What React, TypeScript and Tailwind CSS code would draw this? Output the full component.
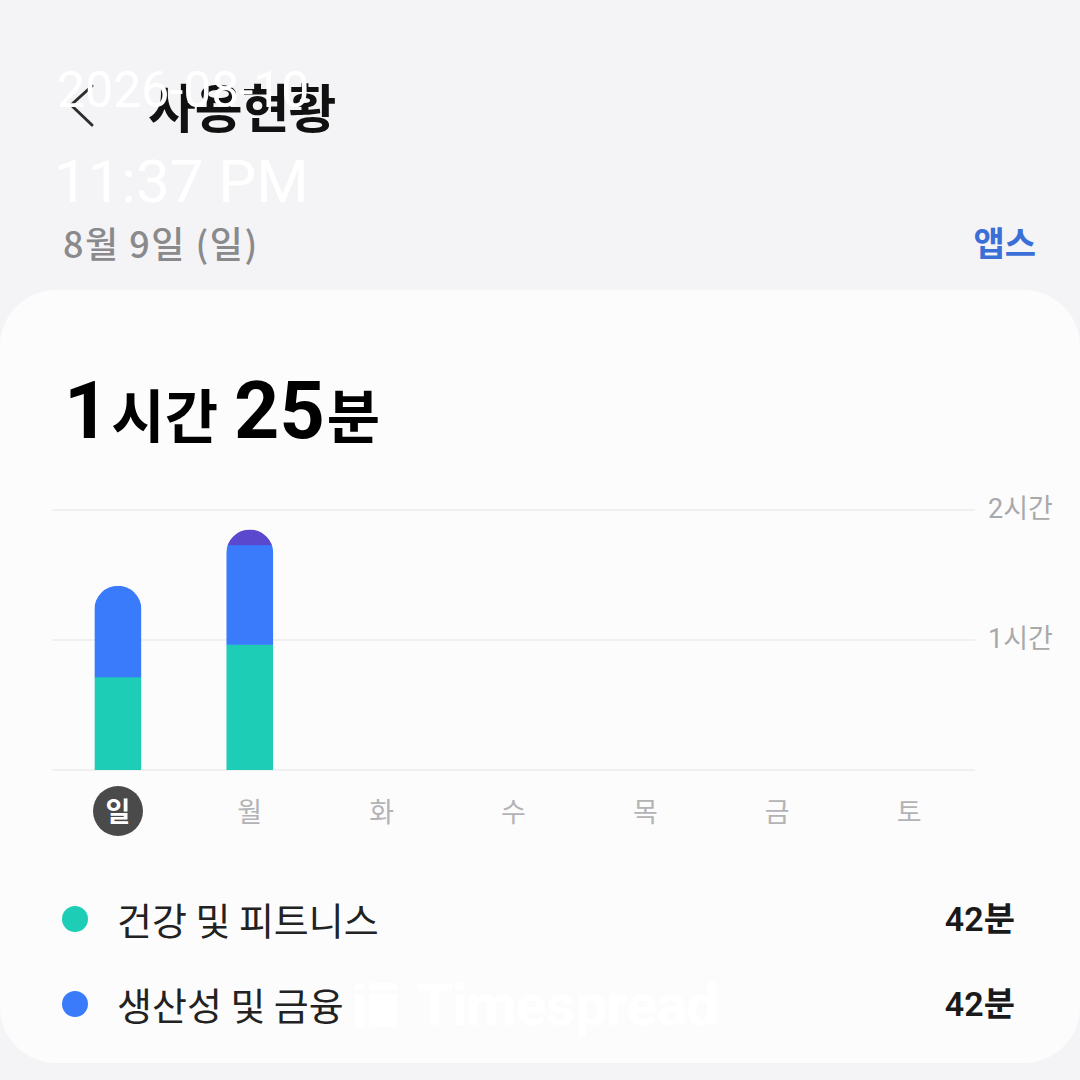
import React from 'react';

const days = ['일', '월', '화', '수', '목', '금', '토'];

// minutes per segment: teal, blue, purple
const usage = [
  { day: 0, teal: 43, blue: 42, purple: 0 },
  { day: 1, teal: 58, blue: 46, purple: 7 },
];

const COL = 923 / 7;
const BAR_W = 47;
const PX_PER_MIN = 130 / 60;

function UsageChart() {
  return (
    <svg width="923" height="262" viewBox="0 0 923 262" className="block">
      <line x1="0" y1="1" x2="923" y2="1" stroke="#ececef" strokeWidth="1.5" />
      <line x1="0" y1="131" x2="923" y2="131" stroke="#ececef" strokeWidth="1.5" />
      <line x1="0" y1="261" x2="923" y2="261" stroke="#ececef" strokeWidth="1.5" />
      {usage.map((u) => {
        const x = u.day * COL + COL / 2 - BAR_W / 2;
        const tealH = u.teal * PX_PER_MIN;
        const blueH = u.blue * PX_PER_MIN;
        const purpleH = u.purple * PX_PER_MIN;
        const total = tealH + blueH + purpleH;
        const top = 261 - total;
        const r = BAR_W / 2;
        const id = `bar-${u.day}`;
        return (
          <g key={u.day}>
            <clipPath id={id}>
              <path
                d={`M${x} 261 L${x} ${top + r} A${r} ${r} 0 0 1 ${x + BAR_W} ${top + r} L${x + BAR_W} 261 Z`}
              />
            </clipPath>
            <g clipPath={`url(#${id})`}>
              <rect x={x} y={261 - tealH} width={BAR_W} height={tealH} fill="#1ecdb5" />
              <rect x={x} y={261 - tealH - blueH} width={BAR_W} height={blueH + 0.5} fill="#3a7bfc" />
              {u.purple > 0 && (
                <rect x={x} y={top} width={BAR_W} height={purpleH + 0.5} fill="#5a49cf" />
              )}
            </g>
          </g>
        );
      })}
    </svg>
  );
}

export default function App() {
  return (
    <div className="relative w-[1080px] h-[1080px] overflow-hidden bg-[#f4f4f6] font-[family-name:Roboto,'Noto_Sans_CJK_KR',sans-serif]">
      {/* header */}
      <div className="pt-[78px]">
        <div className="flex items-center h-[56px] pl-[66px]">
          <svg width="32" height="46" viewBox="0 0 32 46" fill="none">
            <path d="M26 3 L5 22 L26 42" stroke="#2e2e2e" strokeWidth="3" strokeLinecap="round" strokeLinejoin="round" />
          </svg>
          <h1 className="ml-[50px] text-[52px] leading-none font-bold text-[#111] tracking-[-1px] font-[family-name:'Noto_Sans_CJK_KR',sans-serif]">
            사용현황
          </h1>
        </div>

        <div className="mt-[88px] flex items-center justify-between h-[40px] pl-[63px] pr-[44px] font-[family-name:'Noto_Sans_CJK_KR',sans-serif]">
          <span className="text-[36px] leading-none font-medium text-[#8a8a8c] tracking-[1.5px]">8월 9일 (일)</span>
          <span className="text-[34px] leading-none font-bold text-[#3b6fd8]">앱스</span>
        </div>
      </div>

      {/* card */}
      <div className="mt-[28px] bg-[#fcfcfc] rounded-[56px] pt-[82px] pb-[17px]">
        <div className="flex items-baseline pl-[64px] text-black font-bold leading-none">
          <span className="text-[79px]">1</span>
          <span className="text-[58px] ml-[2px] font-[family-name:'Noto_Sans_CJK_KR',sans-serif]">시간</span>
          <span className="text-[79px] ml-[16px]">25</span>
          <span className="text-[58px] ml-[2px] font-[family-name:'Noto_Sans_CJK_KR',sans-serif]">분</span>
        </div>

        <div className="mt-[58px] flex pl-[52px]">
          <UsageChart />
          <div className="ml-[13px] -mt-[15px] flex flex-col text-[27px] leading-[30px] text-[#a9a9ab]">
            <div className="h-[130px]">2시간</div>
            <div className="h-[130px]">1시간</div>
          </div>
        </div>

        <div className="mt-[15px] ml-[52px] w-[923px] grid grid-cols-7 text-[27px] font-[family-name:'Noto_Sans_CJK_KR',sans-serif]">
          {days.map((d, i) => (
            <div key={d} className="flex justify-center items-center h-[50px]">
              {i === 0 ? (
                <span className="flex items-center justify-center w-[50px] h-[50px] rounded-full bg-[#4a4a4a] text-white font-bold">
                  {d}
                </span>
              ) : (
                <span className="text-[#b3b3b5]">{d}</span>
              )}
            </div>
          ))}
        </div>

        <div className="mt-[40px] pl-[62px] pr-[65px] font-[family-name:'Noto_Sans_CJK_KR',sans-serif]">
          <div className="flex items-center h-[85px]">
            <span className="w-[26px] h-[26px] rounded-full bg-[#1ecdb5]" />
            <span className="ml-[29px] text-[38px] leading-none text-[#222]">건강 및 피트니스</span>
            <span className="ml-auto text-[34px] leading-none font-semibold text-[#1a1a1a] font-[family-name:Roboto,'Noto_Sans_CJK_KR',sans-serif]">42분</span>
          </div>
          <div className="flex items-center h-[85px]">
            <span className="w-[26px] h-[26px] rounded-full bg-[#3a7bfc]" />
            <span className="ml-[29px] text-[38px] leading-none text-[#222]">생산성 및 금융</span>
            <span className="ml-auto text-[34px] leading-none font-semibold text-[#1a1a1a] font-[family-name:Roboto,'Noto_Sans_CJK_KR',sans-serif]">42분</span>
          </div>
        </div>
      </div>

      {/* screenshot overlays */}
      <div className="absolute left-[57px] top-[65px] text-[50px] leading-none text-white">2026-08-10</div>
      <div className="absolute left-[54px] top-[152px] text-[60px] leading-none text-white">11:37 PM</div>
      <div className="absolute left-[355px] top-[976px] flex items-center text-white">
        <svg width="42" height="44" viewBox="0 0 42 44" fill="#ffffff">
          <rect x="0" y="0" width="9" height="7" />
          <rect x="0" y="11" width="9" height="33" />
          <rect x="14" y="0" width="28" height="7" />
          <rect x="14" y="11" width="28" height="33" />
        </svg>
        <span className="ml-[20px] text-[58px] leading-none font-bold tracking-[-1px]">Timespread</span>
      </div>
    </div>
  );
}
